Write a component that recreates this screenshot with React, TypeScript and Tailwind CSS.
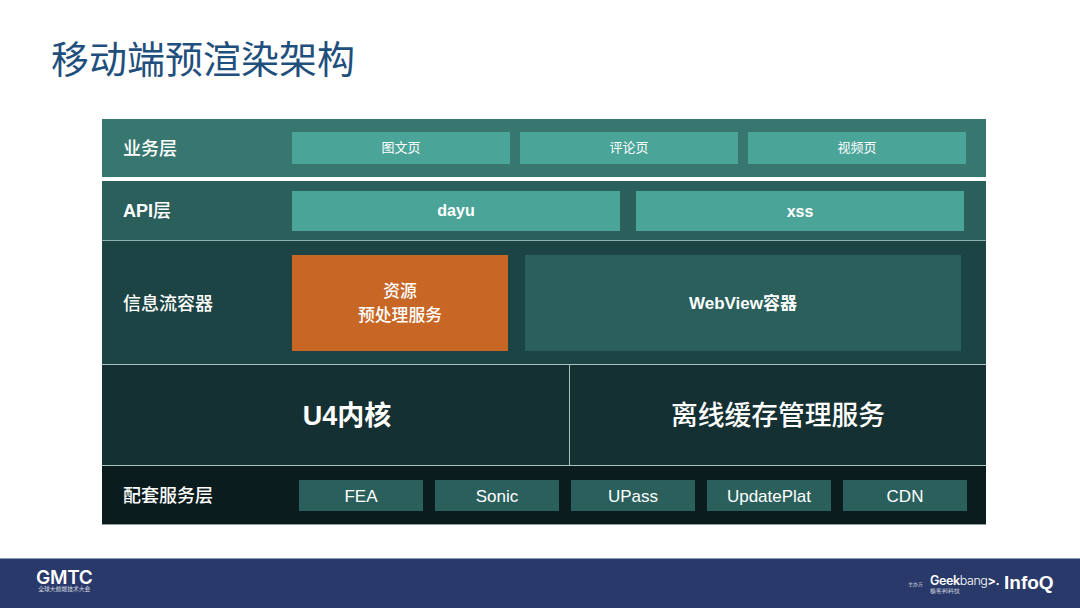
import React from 'react';

const font = "font-['Liberation_Sans','Noto_Sans_CJK_SC',sans-serif]";

const Box = ({ children, className = "" }: { children: React.ReactNode, className?: string }) => (
    <div className={`flex items-center justify-center text-white ${className}`}>{children}</div>
);

const Label = ({ children }: { children: React.ReactNode }) => (
    <div className="w-[190px] shrink-0 pl-[21px] pt-[2px] text-[18px] font-medium text-white">{children}</div>
);

const Footer = () => (
    <div className="h-[50px] flex items-center justify-between bg-[#29396a] border-t border-[#8d98b3] text-white">
        <div className="ml-[36px] mb-[5px] flex flex-col items-center">
            <span className="font-['Inter'] text-[19px] leading-[16px] font-semibold tracking-[-0.3px] h-[16px]">GMTC</span>
            <span className="text-[5.8px] leading-[6px] opacity-80">全球大前端技术大会</span>
        </div>
        <div className="mr-[26px] flex items-center">
            <span className="text-[5px] opacity-70 mr-[7px] mt-[2px]">主办方</span>
            <div className="flex flex-col mr-[6px] font-['Inter'] w-[68px]">
                <span className="text-[12.5px] leading-[13px] h-[13px] tracking-[-0.4px]"><span className="font-semibold">Geek</span><span className="font-light">bang</span><span className="font-bold">&gt;.</span></span>
                <span className="text-[5.8px] leading-[6px] opacity-80 mt-[1px]">极客邦科技</span>
            </div>
            <span className="text-[19px] font-bold w-[50px]">InfoQ</span>
        </div>
    </div>
);

export default function App() {
    return (
        <div className={`w-[1080px] h-[608px] bg-white flex flex-col overflow-hidden ${font}`}>
            <h1 className="h-[119px] shrink-0 pl-[51px] pt-[35px] text-[38px] leading-[50px] font-normal text-[#1f4f7c]">移动端预渲染架构</h1>

            <div className="mx-[102px] w-[884px] flex flex-col shrink-0">
                {/* 业务层 */}
                <div className="h-[58px] bg-[#37776f] flex items-center">
                    <Label>业务层</Label>
                    <div className="flex gap-[10px] text-[13px] font-normal">
                        <Box className="w-[218px] h-[32px] bg-[#4ba498]">图文页</Box>
                        <Box className="w-[218px] h-[32px] bg-[#4ba498]">评论页</Box>
                        <Box className="w-[218px] h-[32px] bg-[#4ba498]">视频页</Box>
                    </div>
                </div>

                {/* API层 */}
                <div className="mt-[4px] h-[60px] bg-[#2b5f5c] border-b border-[#8fb0ac] flex items-center">
                    <Label><span className="font-bold">API</span>层</Label>
                    <div className="flex gap-[16px] text-[16px] font-bold">
                        <Box className="w-[328px] h-[40px] bg-[#4ba498]">dayu</Box>
                        <Box className="w-[328px] h-[40px] pt-[3px] bg-[#4ba498]">xss</Box>
                    </div>
                </div>

                {/* 信息流容器 */}
                <div className="h-[123px] pt-[1px] bg-[#1c4444] flex items-center">
                    <Label>信息流容器</Label>
                    <div className="flex gap-[17px]">
                        <Box className="w-[216px] h-[96px] pt-[2px] bg-[#c86625] text-[16.8px] font-medium leading-[24px] text-center">资源<br />预处理服务</Box>
                        <Box className="w-[436px] h-[96px] pt-[2px] bg-[#2a5f5c] text-[17px] font-bold">WebView容器</Box>
                    </div>
                </div>

                {/* 内核 */}
                <div className="h-[102px] bg-[#153032] border-y border-[#a9c0bd] flex">
                    <Box className="w-[468px] pl-[23px] pt-[2px] border-r border-[#a9c0bd] text-[27px] font-bold"><span>U4内核</span></Box>
                    <Box className="flex-1 pt-[2px] text-[26.75px] font-medium">离线缓存管理服务</Box>
                </div>

                {/* 配套服务层 */}
                <div className="h-[59px] pt-[1px] bg-[#0a1c1e] border-b border-[#8e9b9c] flex items-center">
                    <div className="w-[197px] shrink-0 pl-[21px] pt-[1px] text-[18px] font-medium text-white">配套服务层</div>
                    <div className="flex gap-[12px] text-[17px]">
                        {["FEA", "Sonic", "UPass", "UpdatePlat", "CDN"].map(name => (
                            <Box key={name} className="w-[124px] h-[31px] pt-[2px] bg-[#2a5f5c]">{name}</Box>
                        ))}
                    </div>
                </div>
            </div>

            <div className="mt-[33px]">
                <Footer />
            </div>
        </div>
    );
}
